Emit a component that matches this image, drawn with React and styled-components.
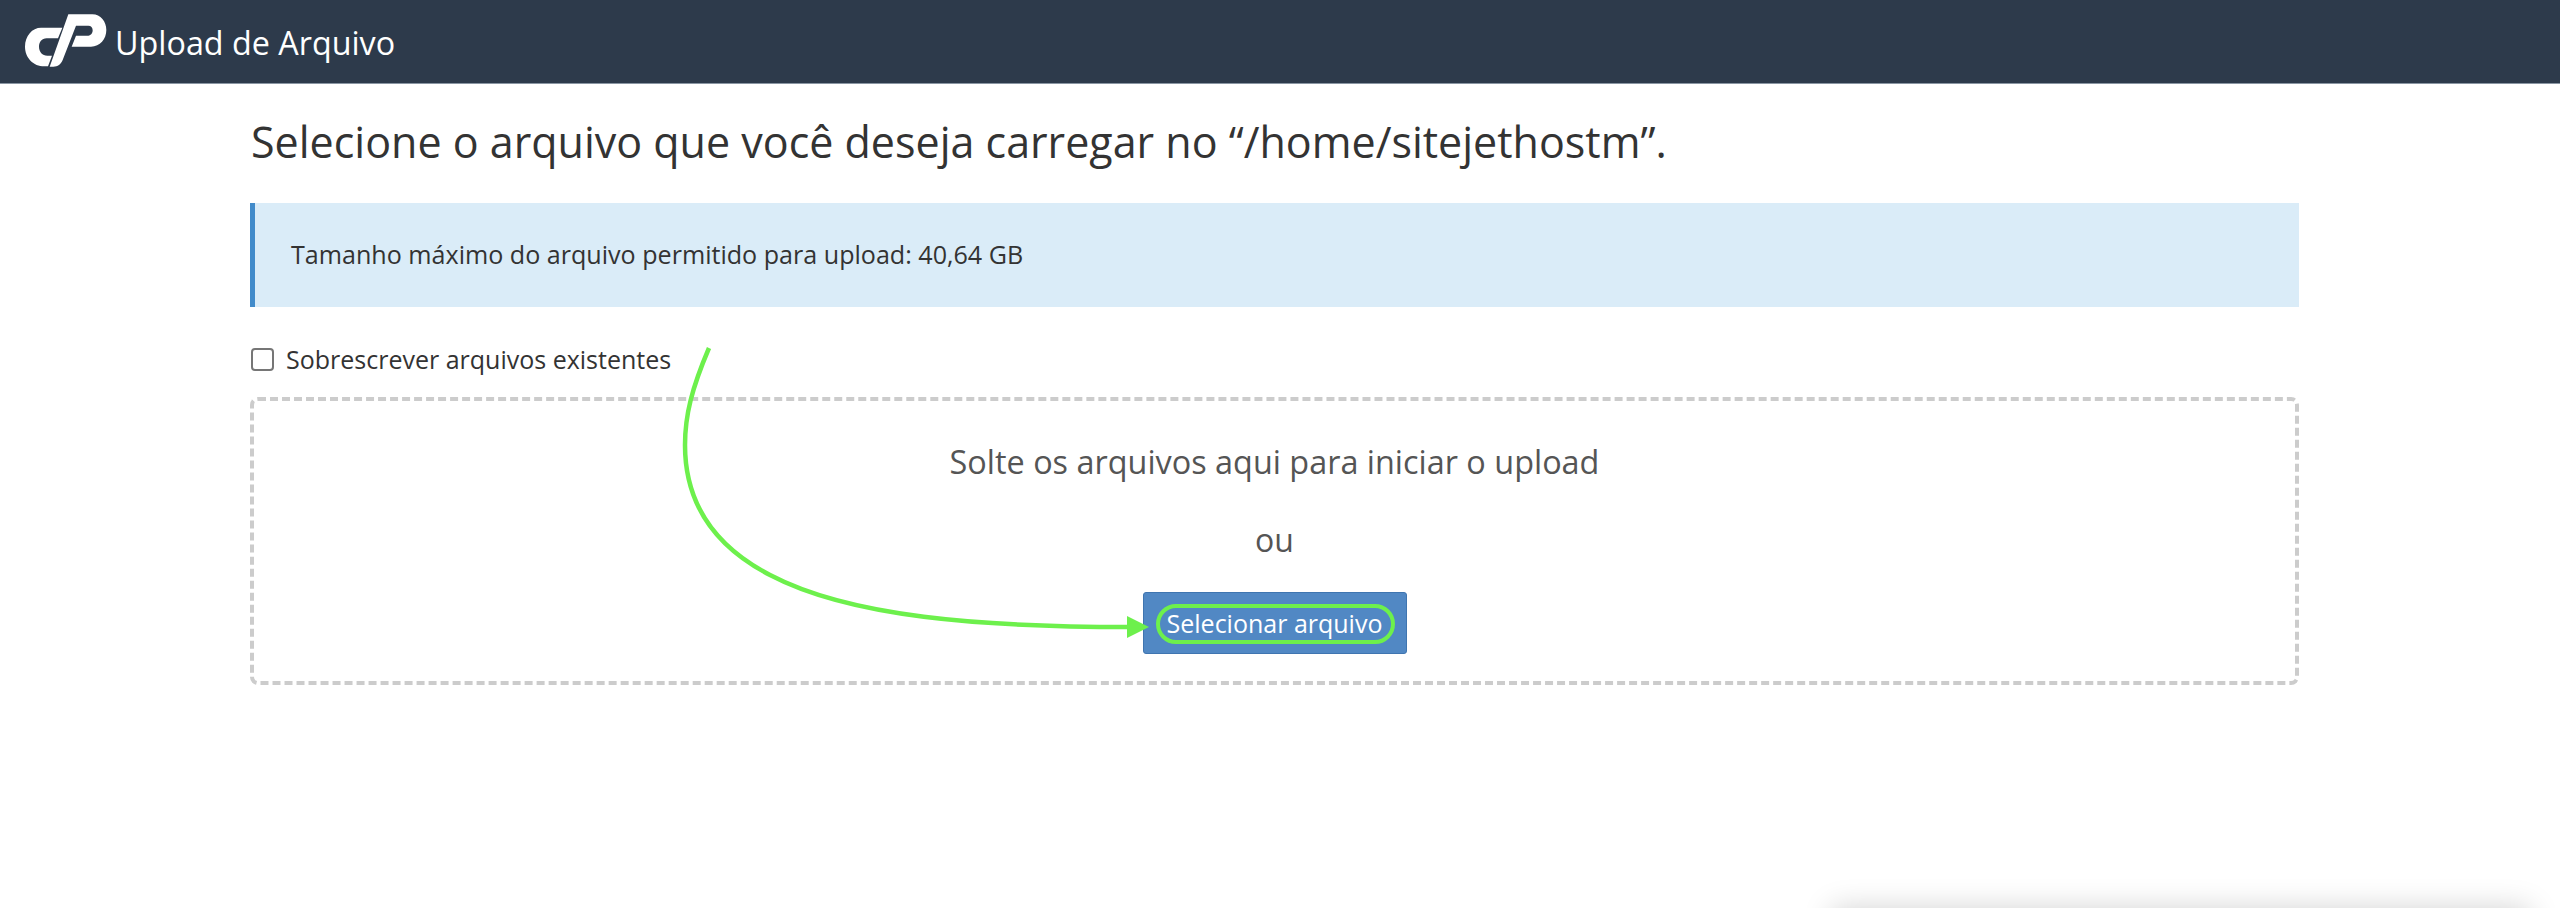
import React from "react";
import styled, { createGlobalStyle } from "styled-components";

const Global = createGlobalStyle`
  html, body { margin: 0; padding: 0; background: #fff; height: 100%; overflow: hidden; }
  body { font-family: "Open Sans", "Noto Sans", sans-serif; color: #333; }
  #root { height: 100%; }
`;

const Page = styled.div`
  position: relative;
  width: 2560px;
  height: 908px;
  overflow: hidden;
  background: #fff;
`;

const TopBar = styled.header`
  display: flex;
  align-items: center;
  box-sizing: border-box;
  height: 84px;
  padding: 0 0 0 15px;
  background: #2d3a4b;
  border-bottom: 1px solid #8a96a3;
`;

const LogoMark = styled.svg`
  width: 100px;
  height: 70px;
  margin-bottom: 3px;
  flex: none;
`;

const AppTitle = styled.h1`
  margin: 0;
  font-size: 32.3px;
  font-weight: 400;
  line-height: 84px;
  color: #fff;
`;

const Main = styled.main`
  box-sizing: border-box;
  width: 2049px;
  margin-left: 250px;
  padding-top: 29px;
`;

const Heading = styled.h2`
  margin: 0 0 0 1px;
  font-size: 43px;
  line-height: 58px;
  font-weight: 400;
  color: #333;
`;

const Notice = styled.div`
  box-sizing: border-box;
  display: flex;
  align-items: center;
  height: 104px;
  margin-top: 32px;
  padding: 0 0 2px 36px;
  background: #daecf8;
  border-left: 5px solid #428bca;
  font-size: 25.1px;
  color: #333;
`;

const OverwriteRow = styled.label`
  display: flex;
  align-items: center;
  height: 32px;
  margin-top: 36px;
  font-size: 25px;
  color: #333;
`;

const Box = styled.span`
  box-sizing: border-box;
  width: 23px;
  height: 23px;
  margin: 0 12px 0 1px;
  border: 2px solid #767676;
  border-radius: 4px;
  background: #fff;
`;

const DropZone = styled.section`
  box-sizing: border-box;
  display: flex;
  flex-direction: column;
  align-items: center;
  height: 288px;
  margin-top: 22px;
  padding-top: 38px;
  border: 4px dashed #ccc;
  border-radius: 8px;
  color: #555;
`;

const DropText = styled.div`
  font-size: 32.4px;
  line-height: 44px;
`;

const OrText = styled.div`
  margin-top: 35px;
  font-size: 32px;
  line-height: 44px;
`;

const SelectButton = styled.button`
  box-sizing: border-box;
  width: 264px;
  height: 62px;
  margin-top: 30px;
  padding: 0;
  font-family: inherit;
  font-size: 25px;
  color: #fff;
  background: #5188c4;
  border: 1px solid #3f75b0;
  border-radius: 3px;
`;

const Annotation = styled.svg`
  position: absolute;
  left: 0;
  top: 0;
  pointer-events: none;
`;

const EdgeShadow = styled.div`
  position: absolute;
  left: 1832px;
  top: 908px;
  width: 698px;
  height: 60px;
  box-shadow: 0 0 30px rgba(0, 0, 0, 0.18);
  background: #ccc;
`;

export default function App() {
  return (
    <Page>
      <Global />
      <TopBar>
        <LogoMark viewBox="0 0 300 210" aria-hidden="true">
          <path fill="#fff" d="M78 68 L142 68 L129 100 L95 100 C80 100 72 112 72 125 C72 140 82 152 97 152 L111 152 L99 184 L88 184 C55 184 30 158 30 125 C30 92 52 68 78 68 Z" />
          <path fill="#fff" d="M160 28 L232 28 C257 28 274 50 274 75 C274 102 255 125 228 125 L170 125 L183 92 L220 92 C228 92 233 84 233 76 C233 68 228 62 220 62 L183 62 L143 165 C138 178 128 185 115 185 L104 185 Z" />
        </LogoMark>
        <AppTitle>Upload de Arquivo</AppTitle>
      </TopBar>
      <Main>
        <Heading>Selecione o arquivo que você deseja carregar no “/home/sitejethostm”.</Heading>
        <Notice>Tamanho máximo do arquivo permitido para upload: 40,64 GB</Notice>
        <OverwriteRow>
          <Box />
          Sobrescrever arquivos existentes
        </OverwriteRow>
        <DropZone>
          <DropText>Solte os arquivos aqui para iniciar o upload</DropText>
          <OrText>ou</OrText>
          <SelectButton>Selecionar arquivo</SelectButton>
        </DropZone>
      </Main>
      <Annotation width="2560" height="908" viewBox="0 0 2560 908" fill="none">
        <path d="M709 348 C692 388 685 415 685 445 C685 500 712 545 770 575 C850 617 980 627 1130 627" stroke="#6df04c" strokeWidth="4.5" />
        <path d="M1127 616 L1149 627 L1127 638 Z" fill="#6df04c" />
        <rect x="1158" y="606" width="235" height="36" rx="18" stroke="#6df04c" strokeWidth="4" />
      </Annotation>
      <EdgeShadow />
    </Page>
  );
}
